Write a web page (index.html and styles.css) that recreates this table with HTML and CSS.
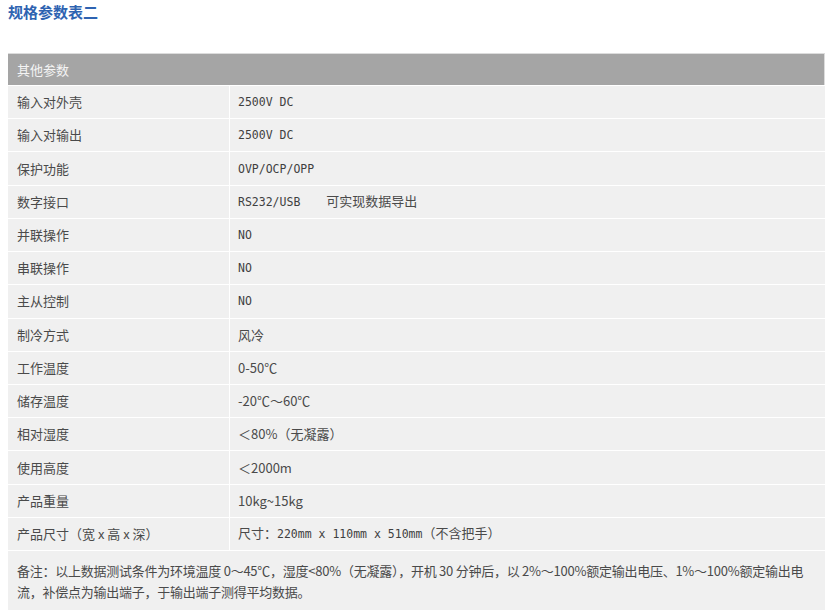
FILE: index.html
```html
<!DOCTYPE html>
<html lang="zh">
<head>
<meta charset="utf-8">
<title>规格参数表二</title>
<link rel="stylesheet" href="styles.css">
</head>
<body>
<h2 class="title">规格参数表二</h2>
<table class="spec">
  <thead>
    <tr><th colspan="2">其他参数</th></tr>
  </thead>
  <tbody>
    <tr><td class="k">输入对外壳</td><td class="v mono">2500V DC</td></tr>
    <tr><td class="k">输入对输出</td><td class="v mono">2500V DC</td></tr>
    <tr><td class="k">保护功能</td><td class="v mono">OVP/OCP/OPP</td></tr>
    <tr><td class="k">数字接口</td><td class="v"><span class="mono">RS232/USB</span><span class="gap">可实现数据导出</span></td></tr>
    <tr><td class="k">并联操作</td><td class="v mono">NO</td></tr>
    <tr><td class="k">串联操作</td><td class="v mono">NO</td></tr>
    <tr><td class="k">主从控制</td><td class="v mono">NO</td></tr>
    <tr><td class="k">制冷方式</td><td class="v">风冷</td></tr>
    <tr><td class="k">工作温度</td><td class="v">0-50℃</td></tr>
    <tr><td class="k">储存温度</td><td class="v">-20℃～60℃</td></tr>
    <tr><td class="k">相对湿度</td><td class="v">＜80%（无凝露）</td></tr>
    <tr><td class="k">使用高度</td><td class="v">＜2000m</td></tr>
    <tr><td class="k">产品重量</td><td class="v">10kg~15kg</td></tr>
    <tr><td class="k">产品尺寸（宽 x 高 x 深）</td><td class="v">尺寸：<span class="mono">220mm x 110mm x 510mm</span>（不含把手）</td></tr>
    <tr><td class="note" colspan="2">备注：以上数据测试条件为环境温度 0～45℃，湿度&lt;80%（无凝露），开机 30 分钟后，以 2%～100%额定输出电压、1%～100%额定输出电流，补偿点为输出端子，于输出端子测得平均数据。</td></tr>
  </tbody>
</table>
</body>
</html>
```
FILE: styles.css
```css
html, body {
  margin: 0;
  padding: 0;
  background: #ffffff;
}
body {
  padding: 0 4px 0 8px;
  font-family: "Noto Sans CJK SC", "Noto Sans", sans-serif;
  color: #4a4a4a;
}
.title {
  margin: 0;
  padding-top: 2px;
  font-size: 15px;
  line-height: 20px;
  font-weight: bold;
  color: #2e63b1;
  height: 51px;
}
.spec {
  width: 817px;
  border-collapse: collapse;
  font-size: 13px;
  background: #f0f0f0;
}
.spec th {
  background: #a5a5a5;
  color: #f4f4f4;
  font-weight: normal;
  text-align: left;
  height: 31px;
  padding: 0 9px;
  border-top: 1px solid #dcdcdc;
  border-right: 1px solid #dcdcdc;
  border-bottom: 1px solid #ffffff;
}
.spec td {
  height: 32.23px;
  padding: 0 8px 0 9px;
  border-bottom: 1px solid #ffffff;
  vertical-align: middle;
  line-height: 16px;
}
.spec td.k {
  width: 204px;
  border-right: 1px solid #ffffff;
}
.spec td.v {
  padding-left: 8px;
}
.mono {
  font-family: "DejaVu Sans Mono", "Liberation Mono", monospace;
  font-size: 11.5px;
  color: #3f3f3f;
}
.gap {
  margin-left: 26px;
}
.spec td.note {
  height: auto;
  padding: 9px 6px 16px 9px;
  line-height: 21px;
  letter-spacing: -0.25px;
  border-bottom: none;
}
```
